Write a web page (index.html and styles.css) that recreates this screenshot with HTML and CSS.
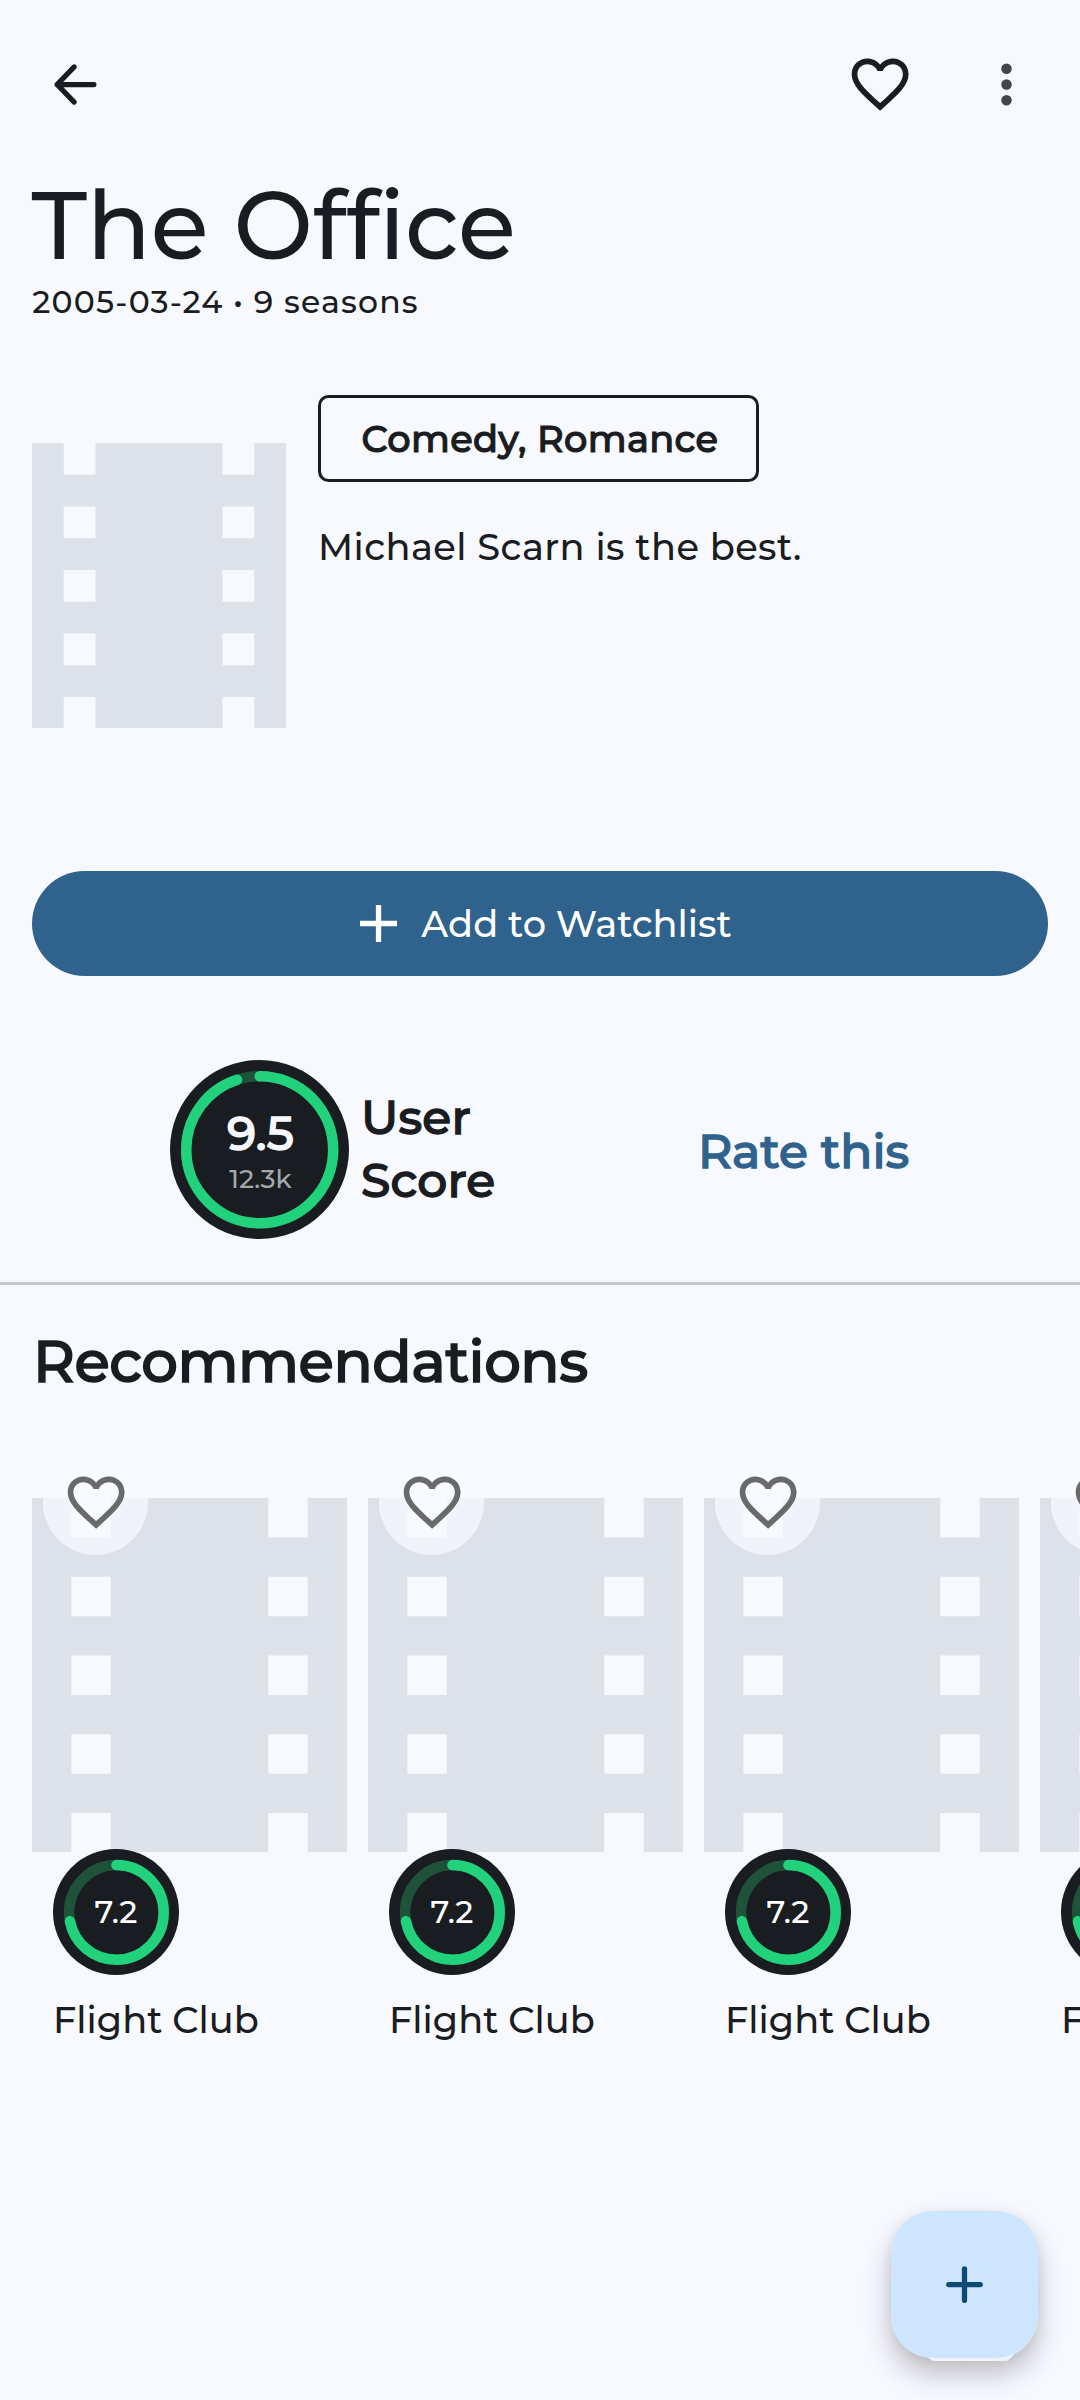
FILE: index.html
```html
<!DOCTYPE html>
<html lang="en">
<head>
<meta charset="utf-8">
<title>The Office</title>
<link rel="stylesheet" href="styles.css">
</head>
<body>
<svg class="defs" aria-hidden="true">
  <symbol id="heart" viewBox="0 0 24 24"><path d="M16.5 3c-1.74 0-3.41.81-4.5 2.09C10.91 3.81 9.24 3 7.5 3 4.42 3 2 5.42 2 8.5c0 3.78 3.4 6.86 8.55 11.54L12 21.35l1.45-1.32C18.6 15.36 22 12.28 22 8.5 22 5.42 19.58 3 16.5 3zm-4.4 15.55l-.1.1-.1-.1C7.14 14.24 4 11.39 4 8.5 4 6.5 5.5 5 7.5 5c1.54 0 3.04.99 3.57 2.36h1.87C13.46 5.99 14.96 5 16.5 5c2 0 3.5 1.5 3.5 3.5 0 2.89-3.14 5.74-7.9 10.05z"/></symbol>
  <symbol id="film" viewBox="0 0 16 18"><path d="M14 0v2h-2V0H4v2H2V0H0v18h2v-2h2v2h8v-2h2v2h2V0zM4 14H2v-2h2zM4 10H2V8h2zM4 6H2V4h2zM14 14h-2v-2h2zM14 10h-2V8h2zM14 6h-2V4h2z"/></symbol>
  <symbol id="ring72" viewBox="0 0 126 126"><circle cx="63" cy="63" r="63" fill="#191c20"/><circle cx="63.4" cy="63.4" r="47.3" class="track"/><circle cx="63.4" cy="63.4" r="47.3" class="arc" pathLength="100" stroke-dasharray="72 100" transform="rotate(-90 63.4 63.4)"/></symbol>
</svg>
<main class="screen">
  <header class="bar">
    <button class="icon-btn back" aria-label="Back"><svg viewBox="0 0 24 24"><path d="M19 12H5M11.5 5.3L5 12l6.5 6.7"/></svg></button>
    <button class="icon-btn fav" aria-label="Favorite"><svg class="heart"><use href="#heart"/></svg></button>
    <button class="icon-btn more" aria-label="More"><svg viewBox="0 0 24 24"><circle cx="12" cy="6" r="2"/><circle cx="12" cy="12" r="2"/><circle cx="12" cy="18" r="2"/></svg></button>
  </header>
  <h1 class="title">The Office</h1>
  <p class="meta">2005-03-24 • 9 seasons</p>
  <section class="hero">
    <div class="poster"><svg class="film"><use href="#film"/></svg></div>
    <div class="info">
      <div class="chip strong">Comedy, Romance</div>
      <p class="overview">Michael Scarn is the best.</p>
    </div>
  </section>
  <button class="watch"><svg viewBox="0 0 14 14"><path d="M6 0h2v6h6v2H8v6H6V8H0V6h6z"/></svg><span>Add to Watchlist</span></button>
  <section class="scores">
    <div class="ring">
      <svg viewBox="0 0 179 179"><circle cx="89.5" cy="89.5" r="89.5" fill="#191c20"/><circle cx="89.7" cy="89.7" r="73.5" class="track"/><circle cx="89.7" cy="89.7" r="73.5" class="arc" pathLength="100" stroke-dasharray="95 100" transform="rotate(-90 89.7 89.7)"/></svg>
      <div class="ring-text"><span class="value strong">9.5</span><span class="votes">12.3k</span></div>
    </div>
    <div class="label strong">User<br>Score</div>
    <a class="rate strong">Rate this</a>
  </section>
  <hr class="rule">
  <h2 class="subhead strong">Recommendations</h2>
  <section class="cards">
    <article class="card">
      <div class="cover"><svg class="film"><use href="#film"/></svg><span class="like"><svg class="heart"><use href="#heart"/></svg></span></div>
      <div class="badge"><svg><use href="#ring72"/></svg><span>7.2</span></div>
      <p class="name">Flight Club</p>
    </article>
    <article class="card">
      <div class="cover"><svg class="film"><use href="#film"/></svg><span class="like"><svg class="heart"><use href="#heart"/></svg></span></div>
      <div class="badge"><svg><use href="#ring72"/></svg><span>7.2</span></div>
      <p class="name">Flight Club</p>
    </article>
    <article class="card">
      <div class="cover"><svg class="film"><use href="#film"/></svg><span class="like"><svg class="heart"><use href="#heart"/></svg></span></div>
      <div class="badge"><svg><use href="#ring72"/></svg><span>7.2</span></div>
      <p class="name">Flight Club</p>
    </article>
    <article class="card">
      <div class="cover"><svg class="film"><use href="#film"/></svg><span class="like"><svg class="heart"><use href="#heart"/></svg></span></div>
      <div class="badge"><svg><use href="#ring72"/></svg><span>7.2</span></div>
      <p class="name">Flight Club</p>
    </article>
  </section>
  <button class="fab" aria-label="Add">
    <svg class="fab-lip" viewBox="0 0 147 16"><path d="M36 12l6 4h74l10-9V0H36z"/></svg>
    <span class="fab-face"><svg viewBox="0 0 24 24"><path d="M12 6v12M6 12h12"/></svg></span>
  </button>
</main>
</body>
</html>
```
FILE: styles.css
```css
* { box-sizing: border-box; margin: 0; padding: 0; }
html, body { width: 1080px; height: 2400px; overflow: hidden; }
body {
  background: #f8f9ff;
  color: #191c20;
  font-family: Montserrat, Inter, sans-serif;
  font-weight: 500;
  font-variant-ligatures: none;
}
button { border: 0; background: none; font: inherit; color: inherit; }
svg { display: block; }
.defs { position: absolute; width: 0; height: 0; }
.screen { position: relative; height: 2400px; overflow: hidden; }
.strong { -webkit-text-stroke: 1.4px currentColor; }

.bar { display: flex; align-items: center; height: 169px; padding-left: 22.5px; }
.icon-btn { display: flex; align-items: center; justify-content: center; width: 105px; height: 105px; border-radius: 50%; }
.icon-btn svg { width: 63px; height: 63px; }
.back svg { fill: none; stroke: #191c20; stroke-width: 2; stroke-linecap: round; stroke-linejoin: round; }
.fav { margin-left: auto; background: #f6faff; }
.heart { fill: #191c20; }
.icon-btn .heart { width: 68.25px; height: 68.25px; }
.more { margin: 0 21px 0 21.5px; }
.more svg { fill: #42474e; }

.title { padding-left: 31.5px; font-size: 94.5px; line-height: 113px; font-weight: 500; letter-spacing: -0.25px; }
.meta { margin-top: -1px; padding-left: 32.3px; font-size: 31.5px; line-height: 42px; letter-spacing: 1.18px; }

.hero { display: flex; gap: 32px; margin: 72px 32px 0; }
.poster { display: flex; align-items: center; width: 254px; height: 381px; }
.film { fill: #dde2ea; }
.poster .film { width: 254px; height: 285.75px; }
.info { flex: 1; }
.chip { display: flex; align-items: center; width: 441px; height: 87px; padding-left: 40.5px; border: 3px solid #191c20; border-radius: 10.5px; font-size: 36.75px; letter-spacing: 0.35px; -webkit-text-stroke-width: 1.1px; }
.overview { margin-top: 38.5px; font-size: 36.75px; line-height: 52.5px; letter-spacing: 0.44px; }

.watch { display: flex; align-items: center; justify-content: center; gap: 24px; width: 1016px; height: 105px; margin: 95px 32px 0; padding-left: 12px; border-radius: 52.5px; background: #2f628c; color: #fff; font-size: 36.75px; }
.watch svg { width: 37px; height: 37px; fill: #fff; }

.scores { display: flex; align-items: center; height: 179px; margin-top: 84px; padding-left: 170px; font-size: 47.25px; }
.ring { display: grid; width: 179px; height: 179px; }
.ring > * { grid-area: 1 / 1; }
.track, .arc { fill: none; stroke-width: 10.5px; }
.track { stroke: #1e5339; }
.arc { stroke: #21d17b; stroke-linecap: round; }
.ring-text { display: flex; flex-direction: column; align-items: center; padding: 45px 0 0 2px; }
.value { line-height: 56px; color: #f8f9ff; letter-spacing: 0.2px; }
.votes { margin-top: 2px; font-size: 26.25px; line-height: 32px; color: #a5a7ab; }
.label { width: 337px; padding: 0 0 2px 12px; line-height: 63px; letter-spacing: 0.15px; }
.rate { padding: 2px 0 0 12px; color: #2f628c; }

.rule { height: 2.6px; margin-top: 43px; border: 0; background: #c2c7cf; }
.subhead { margin: 34.4px 0 0 33px; font-size: 57.75px; line-height: 84px; font-weight: 500; letter-spacing: -0.5px; -webkit-text-stroke-width: 1.6px; }

.cards { display: flex; gap: 21px; margin: 36px 0 0 32px; }
.card { flex: 0 0 315px; }
.cover { position: relative; display: flex; align-items: center; height: 472.5px; }
.cover .film { width: 315px; height: 354.4px; }
.like { position: absolute; left: 11px; top: 11px; display: flex; align-items: center; justify-content: center; width: 105px; height: 105px; padding-left: 1px; border-radius: 50%; background: rgba(246, 250, 255, 0.76); }
.like .heart { flex: none; width: 68.25px; height: 68.25px; fill: #6a6a6a; }
.badge { position: relative; display: grid; place-items: center; width: 126px; height: 126px; margin: -62px 0 0 21px; color: #fff; font-size: 31.5px; }
.badge > * { grid-area: 1 / 1; }
.badge svg { width: 126px; height: 126px; }
.name { margin: 18.5px 0 0 21px; font-size: 36.75px; line-height: 52.5px; }

.fab { position: absolute; left: 891px; top: 2211px; width: 147px; height: 147px; border-radius: 42px; box-shadow: 0 16px 28px rgba(0, 0, 0, 0.24), 0 1px 12px rgba(0, 0, 0, 0.06); }
.fab-lip { position: absolute; left: 0; top: 134px; width: 147px; height: 16px; fill: #f2f3f7; }
.fab-face { position: relative; display: flex; align-items: center; justify-content: center; width: 147px; height: 147px; border-radius: 42px; background: #cee5ff; }
.fab-face svg { width: 63px; height: 63px; fill: none; stroke: #0d4a74; stroke-width: 2; stroke-linecap: round; }
```
